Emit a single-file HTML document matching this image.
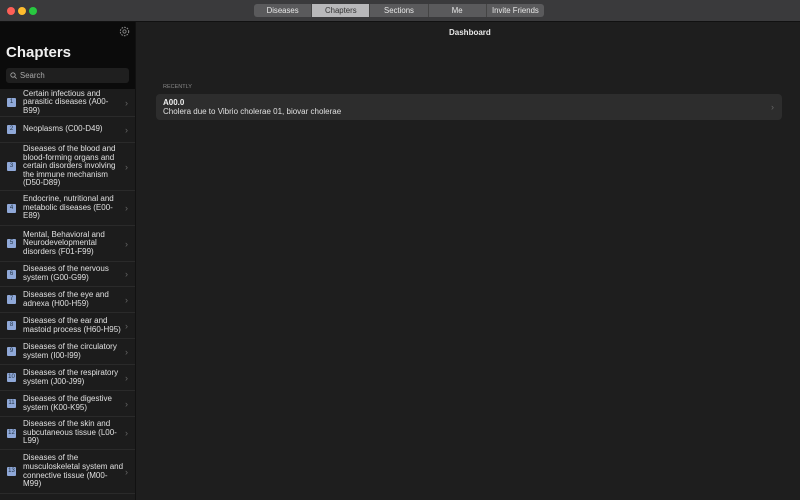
<!DOCTYPE html>
<html><head><style>
*{margin:0;padding:0;box-sizing:border-box}
html,body{width:800px;height:500px;overflow:hidden}
body{background:#1e1e1e;font-family:"Liberation Sans",sans-serif;color:#e6e6e6;position:relative}
.tb{position:absolute;left:0;top:0;width:800px;height:22px;background:#3a3a3c;border-bottom:1px solid #111}
.dot{position:absolute;top:7px;width:8px;height:8px;border-radius:50%}
.seg{position:absolute;left:254px;top:4px;width:290px;height:13px;background:#5a5a5c;border-radius:3px;display:flex;overflow:hidden}
.seg div{flex:1;font-size:7.8px;color:#e8e8e8;text-align:center;line-height:13px;border-right:1px solid #444}
.seg div.on{background:#b8b8ba;color:#333}
.side{position:absolute;left:0;top:22px;width:136px;height:478px;background:#1c1c1c;border-right:1px solid #111;overflow:hidden}
.sh{position:absolute;left:0;top:0;width:136px;height:67px;background:#0b0b0b}
h1{position:absolute;left:6px;top:22px;font-size:15px;font-weight:bold;color:#f0f0f0}
.search{position:absolute;left:6px;top:46px;width:123px;height:15px;background:#1f1f1f;border-radius:3px;font-size:7.8px;color:#aaa;line-height:15px;padding-left:14px}
.row{position:absolute;left:0;width:136px;border-bottom:1px solid #2a2a2a;display:flex;align-items:center}
.num{position:absolute;left:7px;width:9px;height:9px;background:#8fa8d8;color:#234;font-size:6px;text-align:center;line-height:9px;border-radius:1px}
.txt{margin-left:23px;white-space:nowrap;font-size:8px;line-height:8.6px;color:#e0e0e0}
.chev{position:absolute;right:8px;color:#666;font-size:9px}
.card{position:absolute;left:156px;top:94px;width:626px;height:26px;background:#2d2d2d;border-radius:4px}
</style></head><body>
<div class="tb">
<div class="dot" style="left:7px;background:#fe5f57"></div>
<div class="dot" style="left:18px;background:#febc2e"></div>
<div class="dot" style="left:29px;background:#28c840"></div>
<div class="seg"><div>Diseases</div><div class="on">Chapters</div><div>Sections</div><div>Me</div><div style="border:0">Invite Friends</div></div>
</div>
<div class="side">
<div class="sh">
<svg style="position:absolute;left:119px;top:4px" width="11" height="11" viewBox="0 0 10 10"><circle cx="5" cy="5" r="3.8" fill="none" stroke="#888" stroke-width="1" stroke-dasharray="1.5 1"/><circle cx="5" cy="5" r="1.5" fill="none" stroke="#888" stroke-width=".8"/></svg>
<h1>Chapters</h1>
<div class="search"><svg style="position:absolute;left:4px;top:4px" width="7" height="7" viewBox="0 0 7 7"><circle cx="3" cy="3" r="2.2" fill="none" stroke="#aaa" stroke-width=".8"/><line x1="4.6" y1="4.6" x2="6.6" y2="6.6" stroke="#aaa" stroke-width=".8"/></svg>Search</div>
</div>
<div class="row" style="top:67px;height:28px"><span class="num">1</span><div class="txt">Certain infectious and<br>parasitic diseases (A00-<br>B99)</div><span class="chev">›</span></div>
<div class="row" style="top:95px;height:26px"><span class="num">2</span><div class="txt">Neoplasms (C00-D49)</div><span class="chev">›</span></div>
<div class="row" style="top:121px;height:48px"><span class="num">3</span><div class="txt">Diseases of the blood and<br>blood-forming organs and<br>certain disorders involving<br>the immune mechanism<br>(D50-D89)</div><span class="chev">›</span></div>
<div class="row" style="top:169px;height:35px"><span class="num">4</span><div class="txt">Endocrine, nutritional and<br>metabolic diseases (E00-<br>E89)</div><span class="chev">›</span></div>
<div class="row" style="top:204px;height:36px"><span class="num">5</span><div class="txt">Mental, Behavioral and<br>Neurodevelopmental<br>disorders (F01-F99)</div><span class="chev">›</span></div>
<div class="row" style="top:240px;height:25px"><span class="num">6</span><div class="txt">Diseases of the nervous<br>system (G00-G99)</div><span class="chev">›</span></div>
<div class="row" style="top:265px;height:26px"><span class="num">7</span><div class="txt">Diseases of the eye and<br>adnexa (H00-H59)</div><span class="chev">›</span></div>
<div class="row" style="top:291px;height:26px"><span class="num">8</span><div class="txt">Diseases of the ear and<br>mastoid process (H60-H95)</div><span class="chev">›</span></div>
<div class="row" style="top:317px;height:26px"><span class="num">9</span><div class="txt">Diseases of the circulatory<br>system (I00-I99)</div><span class="chev">›</span></div>
<div class="row" style="top:343px;height:26px"><span class="num">10</span><div class="txt">Diseases of the respiratory<br>system (J00-J99)</div><span class="chev">›</span></div>
<div class="row" style="top:369px;height:26px"><span class="num">11</span><div class="txt">Diseases of the digestive<br>system (K00-K95)</div><span class="chev">›</span></div>
<div class="row" style="top:395px;height:33px"><span class="num">12</span><div class="txt">Diseases of the skin and<br>subcutaneous tissue (L00-<br>L99)</div><span class="chev">›</span></div>
<div class="row" style="top:428px;height:44px"><span class="num">13</span><div class="txt">Diseases of the<br>musculoskeletal system and<br>connective tissue (M00-<br>M99)</div><span class="chev">›</span></div>
<div class="row" style="top:472px;height:20px;border:0"><div class="txt" style="margin-top:12px;color:#888">Diseases of the</div></div>
</div>
<div style="position:absolute;left:449px;top:28px;font-size:8px;font-weight:bold;color:#e8e8e8">Dashboard</div>
<div style="position:absolute;left:163px;top:84px;font-size:5.5px;color:#888">RECENTLY</div>
<div class="card">
<div style="position:absolute;left:7px;top:4px;font-size:8px;font-weight:bold;color:#eee">A00.0</div>
<div style="position:absolute;left:7px;top:13px;font-size:8px;color:#e0e0e0">Cholera due to Vibrio cholerae 01, biovar cholerae</div>
<div style="position:absolute;right:8px;top:8px;font-size:9px;color:#666">›</div>
</div>
</body></html>
